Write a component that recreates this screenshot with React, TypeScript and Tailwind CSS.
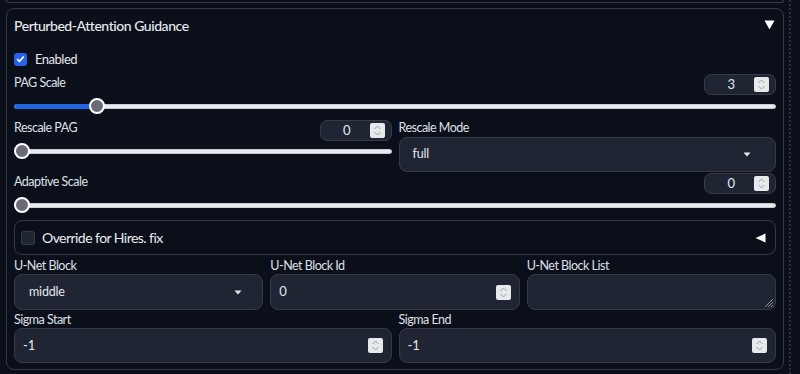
import React from "react";

const BORDER = "border-[#363b47]";

function Spinner() {
  return (
    <div className="w-[15px] h-[15px] bg-[#e8e9ec] rounded-[2px] flex items-center justify-center shrink-0">
      <svg width="9" height="13" viewBox="0 0 9 13">
        <path d="M1.5 5 L4.5 2 L7.5 5 M1.5 8 L4.5 11 L7.5 8" stroke="#9aa0aa" fill="none" strokeWidth="1" />
      </svg>
    </div>
  );
}

function NumBox({ value }: { value: string }) {
  return (
    <div className={`w-[72px] h-[21px] rounded-[7px] border ${BORDER} bg-[#1f2533] flex items-center justify-end pr-[6px] gap-[19px]`}>
      <span className="text-[13px] text-[#e5e7f0] leading-none">{value}</span>
      <Spinner />
    </div>
  );
}

function Slider({ frac }: { frac: number }) {
  const width = `calc(8px + ${frac} * (100% - 16px))`;
  return (
    <div className="relative h-[18px] flex items-center">
      <div className="h-[5px] w-full rounded-full bg-[#e9e9ee] border border-[#c9cad1]" />
      <div className="absolute left-0 h-[5px] rounded-l-full bg-[#1f66e0]" style={{ width }} />
      <div
        className="absolute w-[16px] h-[16px] rounded-full bg-[#6b6b78] border-2 border-white"
        style={{ left: `calc(${frac} * (100% - 16px))` }}
      />
    </div>
  );
}

function Label({ children }: { children: React.ReactNode }) {
  return (
    <div className="h-[16px] flex items-center text-[12.5px] tracking-[-0.5px] text-[#dde0e6] leading-none">{children}</div>
  );
}

function Caret() {
  return (
    <svg width="8" height="5" viewBox="0 0 8 5">
      <polygon points="0.5,0.5 7.5,0.5 4,4.5" fill="#e5e7eb" />
    </svg>
  );
}

function Select({ value, h, pl, pr }: { value: string; h: string; pl: string; pr: string }) {
  return (
    <div className={`${h} ${pl} ${pr} rounded-[8px] border ${BORDER} bg-[#1f2533] flex items-center justify-between`}>
      <span className="text-[12.5px] tracking-[-0.2px] text-[#e5e7f0]">{value}</span>
      <Caret />
    </div>
  );
}

function InputSpin({ value }: { value: string }) {
  return (
    <div className={`h-[35px] rounded-[8px] border ${BORDER} bg-[#1f2533] flex items-center justify-between pl-[8px] pr-[8px]`}>
      <span className="text-[13px] text-[#e5e7f0]">{value}</span>
      <Spinner />
    </div>
  );
}

export default function App() {
  return (
    <div className="w-[800px] h-[374px] overflow-hidden bg-[#0b0f19] flex [font-family:Lato,sans-serif]">
      <div className="w-[784px] pl-[6px] flex flex-col">
        <div className={`h-[3px] border-b border-l border-r ${BORDER} rounded-b-[8px]`} />
        <div className={`mt-[5px] border ${BORDER} rounded-[8px] px-[7px] pb-[6px] flex flex-col`}>
          <div className="h-[32px] flex items-center justify-between">
            <span className="text-[14px] tracking-[-0.45px] text-[#e8eaef] font-medium">Perturbed-Attention Guidance</span>
            <svg width="11" height="10" viewBox="0 0 11 10" className="mr-[1px]">
              <polygon points="0.5,0.5 10.5,0.5 5.5,9.5" fill="#ffffff" />
            </svg>
          </div>
          <div className="mt-[6px] h-[24px] flex items-center gap-[8px]">
            <div className="w-[13px] h-[13px] rounded-[3px] bg-[#2563eb] flex items-center justify-center">
              <svg width="9" height="8" viewBox="0 0 9 8">
                <path d="M1.2 4.2 L3.5 6.3 L7.8 1.5" stroke="#ffffff" strokeWidth="1.7" fill="none" />
              </svg>
            </div>
            <span className="text-[13px] tracking-[-0.5px] text-[#e5e7eb] mt-[2px]">Enabled</span>
          </div>

          <div className="mt-[3px] flex flex-col">
            <div className="h-[21px] flex items-center justify-between">
              <span className="text-[12.5px] tracking-[-0.5px] text-[#dde0e6] -mt-[2px]">PAG Scale</span>
              <NumBox value="3" />
            </div>
            <div className="mt-[2px]">
              <Slider frac={0.1} />
            </div>
          </div>

          <div className="mt-[5px] grid grid-cols-2 gap-[7px]">
            <div className="flex flex-col">
              <div className="h-[21px] flex items-center justify-between">
                <span className="text-[12.5px] tracking-[-0.5px] text-[#dde0e6] -mt-[5px]">Rescale PAG</span>
                <NumBox value="0" />
              </div>
              <div className="mt-[1px]">
                <Slider frac={0} />
              </div>
            </div>
            <div className="flex flex-col">
              <Label>Rescale Mode</Label>
              <div className="mt-[1px]">
                <Select value="full" h="h-[35px]" pl="pl-[13px]" pr="pr-[24px]" />
              </div>
            </div>
          </div>

          <div className="mt-[1px] flex flex-col">
            <div className="h-[21px] flex items-center justify-between">
              <span className="text-[12.5px] tracking-[-0.5px] text-[#dde0e6] -mt-[2px]">Adaptive Scale</span>
              <NumBox value="0" />
            </div>
            <div className="mt-[2px]">
              <Slider frac={0} />
            </div>
          </div>

          <div className={`mt-[6px] h-[35px] rounded-[8px] border ${BORDER} flex items-center justify-between pl-[6px] pr-[9px]`}>
            <div className="flex items-center gap-[7px]">
              <div className={`w-[14px] h-[14px] rounded-[3px] bg-[#1f2533] border ${BORDER}`} />
              <span className="text-[14px] tracking-[-0.55px] text-[#e8eaef]">Override for Hires. fix</span>
            </div>
            <svg width="11" height="10" viewBox="0 0 11 10">
              <polygon points="0.5,5 10.5,0.5 10.5,9.5" fill="#ffffff" />
            </svg>
          </div>

          <div className="mt-[3px] grid grid-cols-3 gap-[7px]">
            <div className="flex flex-col">
              <Label>U-Net Block</Label>
              <Select value="middle" h="h-[36px]" pl="pl-[14px]" pr="pr-[20px]" />
            </div>
            <div className="flex flex-col">
              <Label>U-Net Block Id</Label>
              <div className={`h-[36px] rounded-[8px] border ${BORDER} bg-[#1f2533] flex items-center justify-between pl-[8px] pr-[8px]`}>
                <span className="text-[13px] text-[#e5e7f0]">0</span>
                <Spinner />
              </div>
            </div>
            <div className="flex flex-col">
              <Label>U-Net Block List</Label>
              <div className={`h-[36px] rounded-[8px] border ${BORDER} bg-[#1f2533] relative`}>
                <svg width="10" height="10" viewBox="0 0 10 10" className="absolute right-[1px] bottom-[1px]">
                  <path d="M9 1 L1 9 M9 4 L4 9 M9 7 L7 9" stroke="#8b8f98" strokeWidth="1" />
                </svg>
              </div>
            </div>
          </div>

          <div className="mt-[2px] grid grid-cols-2 gap-[7px]">
            <div className="flex flex-col">
              <Label>Sigma Start</Label>
              <InputSpin value="-1" />
            </div>
            <div className="flex flex-col">
              <Label>Sigma End</Label>
              <InputSpin value="-1" />
            </div>
          </div>
        </div>
      </div>
      <div className="ml-[5px] h-full border-l-2 border-dotted border-[#2a2f3a]" />
    </div>
  );
}
